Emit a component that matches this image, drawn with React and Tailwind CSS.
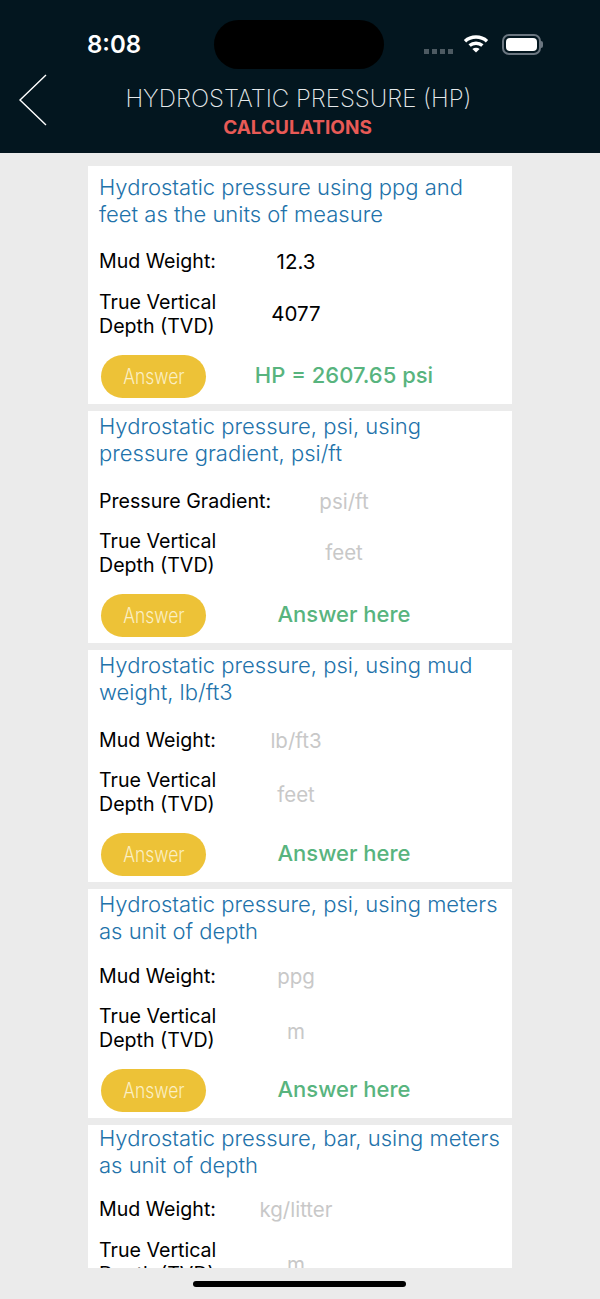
const cards = [
  {
    title: ["Hydrostatic pressure using ppg and", "feet as the units of measure"],
    box: "h-[238px] pt-[8px]",
    row1: "mt-[14px] h-[40px]",
    row2: "mt-[8px] h-[48px]",
    mud: "12.3",
    tvd: "4077",
    filled: true,
    labelW: "w-[132px]",
    answer: "HP = 2607.65 psi",
  },
  {
    title: ["Hydrostatic pressure, psi, using", "pressure gradient, psi/ft"],
    box: "h-[232px] pt-[2px]",
    row1: "mt-[15px] h-[40px]",
    row2: "mt-[7px] h-[48px]",
    label: "Pressure Gradient:",
    mud: "psi/ft",
    tvd: "feet",
    labelW: "w-[180px]",
    answer: "Answer here",
  },
  {
    title: ["Hydrostatic pressure, psi, using mud", "weight, lb/ft3"],
    box: "h-[232px] pt-[2px]",
    row1: "mt-[15px] h-[40px]",
    row2: "mt-[7px] h-[48px]",
    tvdShift: "mt-[6px]",
    mud: "lb/ft3",
    tvd: "feet",
    labelW: "w-[132px]",
    answer: "Answer here",
  },
  {
    title: ["Hydrostatic pressure, psi, using meters", "as unit of depth"],
    box: "h-[229px] pt-[2px]",
    row1: "mt-[12px] h-[40px]",
    row2: "mt-[7px] h-[48px]",
    tvdShift: "mt-[8px]",
    mud: "ppg",
    tvd: "m",
    labelW: "w-[132px]",
    answer: "Answer here",
  },
  {
    title: ["Hydrostatic pressure, bar, using meters", "as unit of depth"],
    box: "h-[236px] pt-[0px]",
    row1: "mt-[11px] h-[40px]",
    row2: "mt-[8px] h-[48px]",
    tvdShift: "mt-[6px]",
    mud: "kg/litter",
    tvd: "m",
    labelW: "w-[132px]",
    answer: "Answer here",
  },
];

function Wifi() {
  return (
    <svg width="26" height="19" viewBox="0 0 26 19" fill="none" stroke="white" strokeWidth="3.4">
      <path d="M2 7.2C8 1.6 18 1.6 24 7.2" />
      <path d="M6.6 11.6C10.2 8.4 15.8 8.4 19.4 11.6" />
      <path d="M13 18.6L9.4 14.9C11.4 13.2 14.6 13.2 16.6 14.9Z" fill="white" stroke="none" />
    </svg>
  );
}

function Battery() {
  return (
    <div className="flex items-center">
      <div className="w-[39px] h-[21px] rounded-[7px] border-2 border-[#6b7680] p-[2px]">
        <div className="w-full h-full rounded-[4px] bg-white" />
      </div>
      <div className="w-[2px] h-[7px] rounded-r-sm bg-[#6b7680]" />
    </div>
  );
}

function Card({ c }) {
  const valueColor = c.filled ? "text-black" : "text-[#c8c8c8]";
  return (
    <div className={`w-[424px] shrink-0 bg-white px-[11px] ${c.box}`}>
      <h2 className="text-[22px] leading-[27px] font-light text-[#2272aa] whitespace-nowrap">
        {c.title[0]}
        <br />
        {c.title[1]}
      </h2>
      <div className={`flex items-center ${c.row1}`}>
        <span className={`${c.labelW} text-[19.6px] text-black`}>{c.label || "Mud Weight:"}</span>
        <span className={`w-[130px] text-center text-[20.5px] ${valueColor}`}>{c.mud}</span>
      </div>
      <div className={`flex items-center ${c.row2}`}>
        <span className={`${c.labelW} text-[19.6px] leading-[24px] text-black`}>
          True Vertical
          <br />
          Depth (TVD)
        </span>
        <span className={`w-[130px] text-center text-[20.5px] ${valueColor} ${c.tvdShift || ""}`}>{c.tvd}</span>
      </div>
      <div className="flex items-center mt-[17px]">
        <button className="ml-[2px] w-[105px] h-[43px] rounded-[22px] bg-[#edc237] text-[#fbefc4] text-[21px] font-light">
          <span className="inline-block scale-x-[0.83]">Answer</span>
        </button>
        <span className="w-[276px] mb-[2px] text-center text-[22px] font-medium text-[#58b47e] whitespace-nowrap">
          {c.answer}
        </span>
      </div>
    </div>
  );
}

export default function App() {
  return (
    <div className="w-[600px] h-[1299px] flex flex-col overflow-hidden bg-[#ebebeb] font-['Inter',sans-serif]">
      <header className="h-[153px] shrink-0 bg-[#03161f] pt-[20px]">
        <div className="flex items-center h-[49px]">
          <span className="ml-[87px] w-[127px] text-[24px] font-semibold text-white">8:08</span>
          <div className="w-[170px] h-[49px] rounded-[25px] bg-black" />
          <div className="ml-[40px] mt-[14px] flex gap-[3px]">
            <i className="w-[5px] h-[5px] bg-[#4d5a62]" />
            <i className="w-[5px] h-[5px] bg-[#4d5a62]" />
            <i className="w-[5px] h-[5px] bg-[#4d5a62]" />
            <i className="w-[5px] h-[5px] bg-[#4d5a62]" />
          </div>
          <div className="ml-[10px] mb-[2px]">
            <Wifi />
          </div>
          <div className="ml-[13px]">
            <Battery />
          </div>
        </div>
        <div className="relative mt-[3px] pr-[3px] text-center">
          <svg className="absolute left-[18px] top-[2px]" width="30" height="52" viewBox="0 0 30 52" fill="none" stroke="white" strokeWidth="1.4">
            <path d="M28 1L2 26L28 51" />
          </svg>
          <div className="pt-[12px] text-[24px] leading-[30px] font-extralight text-[#e6eaec]">
            HYDROSTATIC PRESSURE (HP)
          </div>
          <div className="pr-[2px] text-[19px] leading-[28px] font-bold text-[#e85a56]">CALCULATIONS</div>
        </div>
      </header>
      <main className="h-[1115px] shrink-0 overflow-hidden pt-[13px] flex flex-col items-center gap-[7px]">
        {cards.map((c) => (
          <Card key={c.title[0]} c={c} />
        ))}
      </main>
      <footer className="flex justify-center pt-[13px] pr-[2px]">
        <div className="w-[213px] h-[6px] rounded-full bg-black" />
      </footer>
    </div>
  );
}
